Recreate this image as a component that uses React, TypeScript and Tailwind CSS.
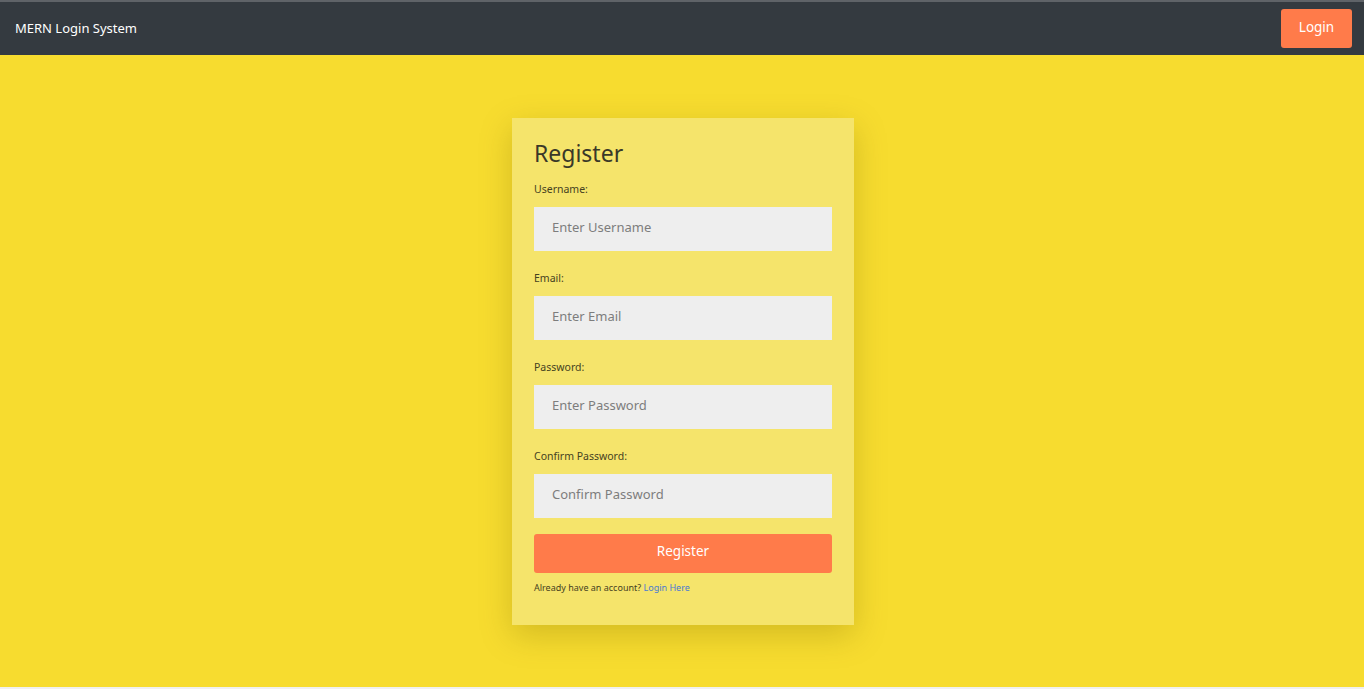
import React from "react";

const fields = [
  { label: "Username:", placeholder: "Enter Username", type: "text" },
  { label: "Email:", placeholder: "Enter Email", type: "email" },
  { label: "Password:", placeholder: "Enter Password", type: "password" },
  { label: "Confirm Password:", placeholder: "Confirm Password", type: "password" },
];

export default function App() {
  return (
    <div
      className="w-[1364px] h-[689px] flex flex-col bg-[#f0f0f0] overflow-hidden"
      style={{ fontFamily: '"Noto Sans", "Open Sans", sans-serif' }}
    >
      <nav className="h-[55px] shrink-0 bg-[#343a40] border-t-2 border-[#5f6368] flex items-center justify-between pl-[15px] pr-[12px]">
        <span className="text-white text-[13px] leading-none">MERN Login System</span>
        <button className="w-[71px] h-[39px] pb-[2px] bg-[#ff7b4a] rounded-[3px] text-white text-[13.5px] leading-none">
          Login
        </button>
      </nav>
      <main className="h-[632px] shrink-0 bg-[#f7dc2f] flex justify-center pl-[2px]">
        <div className="mt-[63px] w-[342px] h-[507px] bg-[#f5e46b] px-[22px] pt-[20px] pb-[30px] flex flex-col shadow-[0_10px_30px_rgba(120,100,0,0.28)]">
          <h1 className="h-[30px] text-[23px] leading-[30px] text-[#3a3828] font-normal">Register</h1>
          <div className="mt-[13px] flex flex-col gap-[19px]">
            {fields.map((f) => (
              <div key={f.label} className="flex flex-col">
                <label className="h-[16px] text-[10.5px] leading-[16px] text-[#45421f]">{f.label}</label>
                <input
                  type={f.type}
                  placeholder={f.placeholder}
                  className="mt-[10px] h-[44px] w-full bg-[#eeeeee] px-[18px] pb-[5px] text-[13px] text-[#555] placeholder:text-[#7d7d7d] outline-none"
                />
              </div>
            ))}
          </div>
          <button className="mt-[16px] h-[39px] w-full pb-[3px] bg-[#ff7b4a] rounded-[3px] text-white text-[13.5px] leading-none">
            Register
          </button>
          <p className="mt-[8px] h-[14px] text-[9px] leading-[14px] text-[#45421f]">
            Already have an account? <a className="text-[#4a7bd0]">Login Here</a>
          </p>
        </div>
      </main>
    </div>
  );
}
